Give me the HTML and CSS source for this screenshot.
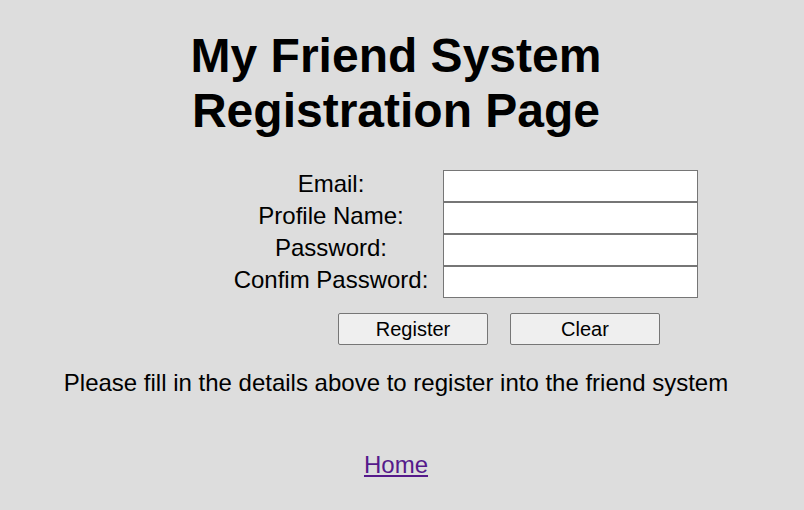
FILE: index.html
```html
<!DOCTYPE html>
<html>
<head>
<meta charset="utf-8">
<title>Registration Page</title>
<link rel="stylesheet" href="styles.css">
</head>
<body>
<div class="page">
  <h1 class="title">My Friend System<br>Registration Page</h1>
  <form class="reg-form">
    <div class="fields">
      <label class="field-label" for="email">Email:</label>
      <input class="field-input" id="email" type="text">
      <label class="field-label" for="pname">Profile Name:</label>
      <input class="field-input" id="pname" type="text">
      <label class="field-label" for="pw">Password:</label>
      <input class="field-input" id="pw" type="password">
      <label class="field-label" for="cpw">Confim Password:</label>
      <input class="field-input" id="cpw" type="password">
    </div>
    <div class="actions">
      <button class="btn" type="submit">Register</button>
      <button class="btn" type="reset">Clear</button>
    </div>
  </form>
  <p class="note">Please fill in the details above to register into the friend system</p>
  <p class="home"><a class="home-link" href="#">Home</a></p>
</div>
</body>
</html>
```

FILE: styles.css
```css
html, body {
  margin: 0;
  padding: 0;
  background: #dddddd;
}
body {
  font-family: "Liberation Sans", Arial, sans-serif;
  color: #000;
}
.page {
  width: 776px;
  margin-left: 8px;
  padding-top: 28px;
}
.title {
  margin: 0;
  font-size: 48px;
  line-height: 55px;
  font-weight: bold;
  text-align: center;
}
.reg-form {
  margin: 32px 0 0 0;
}
.fields {
  display: grid;
  grid-template-columns: 200px 255px;
  grid-auto-rows: 32px;
  column-gap: 12px;
  margin-left: 223px;
}
.field-label {
  font-size: 24px;
  line-height: 28px;
  text-align: center;
  align-self: start;
}
.field-input {
  box-sizing: border-box;
  width: 255px;
  height: 32px;
  margin: 0;
  border: 1px solid #767676;
  background: #fff;
  font-size: 20px;
  padding: 2px 4px;
}
.actions {
  display: flex;
  gap: 22px;
  margin: 15px 0 0 330px;
}
.btn {
  box-sizing: border-box;
  width: 150px;
  height: 32px;
  margin: 0;
  padding: 0;
  background: #efefef;
  border: 1px solid #767676;
  border-radius: 2px;
  font-family: "Liberation Sans", Arial, sans-serif;
  font-size: 20px;
  color: #000;
}
.note {
  margin: 24px 0 0 0;
  font-size: 24px;
  line-height: 28px;
  text-align: center;
}
.home {
  margin: 54px 0 0 0;
  font-size: 24px;
  line-height: 28px;
  text-align: center;
}
.home-link {
  color: #551a8b;
  text-decoration: underline;
}
```
